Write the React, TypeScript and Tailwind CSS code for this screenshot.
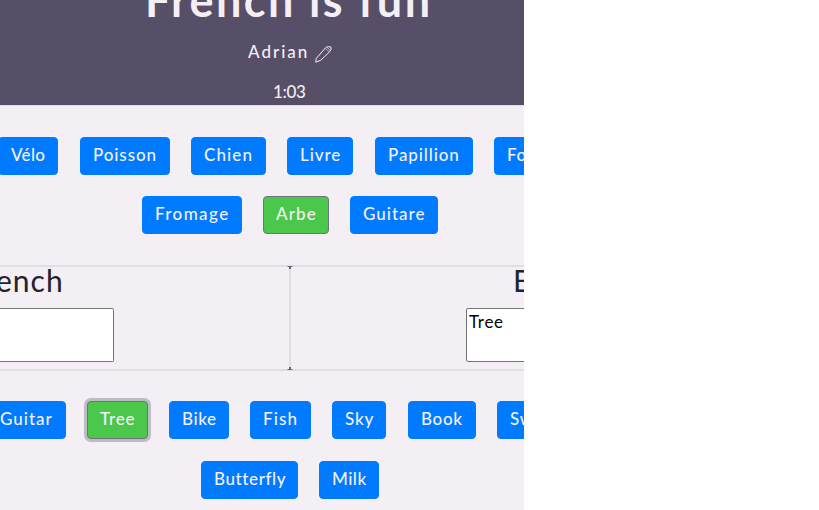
type Word = { text: string; size: string; picked?: boolean; focused?: boolean };

const frenchTop: Word[] = [
  { text: "Vélo", size: "ml-[-2px] w-[60px] tracking-[0.3px]" },
  { text: "Poisson", size: "ml-[22px] w-[90px] tracking-[0.9px]" },
  { text: "Chien", size: "ml-[21px] w-[75px] tracking-[1.1px]" },
  { text: "Livre", size: "ml-[21px] w-[66px] tracking-[0.9px]" },
  { text: "Papillion", size: "ml-[22px] w-[98px] tracking-[0.9px]" },
  { text: "Fo", size: "ml-[21px] w-[46px] tracking-[0.7px]" },
];
const frenchBottom: Word[] = [
  { text: "Fromage", size: "ml-[142px] w-[100px] tracking-[1.4px]" },
  { text: "Arbe", size: "ml-[21px] w-[66px] tracking-[1.1px]", picked: true },
  { text: "Guitare", size: "ml-[21px] w-[88px] tracking-[1px]" },
];
const englishTop: Word[] = [
  { text: "Guitar", size: "ml-[-13px] w-[79px] tracking-[1px]" },
  { text: "Tree", size: "ml-[21px] w-[61px] tracking-[0.8px]", picked: true, focused: true },
  { text: "Bike", size: "ml-[21px] w-[60px] tracking-[0.6px]" },
  { text: "Fish", size: "ml-[21px] w-[61px] tracking-[1.1px]" },
  { text: "Sky", size: "ml-[21px] w-[54px] tracking-[0.8px]" },
  { text: "Book", size: "ml-[22px] w-[68px] tracking-[0.7px]" },
  { text: "Sw", size: "ml-[21px] w-[50px] tracking-[0.7px]" },
];
const englishBottom: Word[] = [
  { text: "Butterfly", size: "ml-[201px] w-[97px] tracking-[0.6px]" },
  { text: "Milk", size: "ml-[21px] w-[60px] tracking-[0.5px]" },
];

function Row({ words, className }: { words: Word[]; className: string }) {
  return (
    <div className={`flex h-[38px] ${className}`}>
      {words.map((w) => (
        <button
          key={w.text}
          className={`h-[38px] shrink-0 whitespace-nowrap rounded-[4px] border pl-3 pb-[2px] text-left text-[17px] leading-[24px] font-medium text-[#f4eff5] ${w.size} ${
            w.picked ? "border-[#6c757d] bg-[#4bc74b]" : "border-[#007bff] bg-[#007bff]"
          } ${w.focused ? "shadow-[0_0_0_3px_#bdbbc6]" : ""}`}
        >
          {w.text}
        </button>
      ))}
    </div>
  );
}

function Pencil() {
  return (
    <svg width="17" height="17" viewBox="0 0 17 17" fill="none" stroke="#f4eff5" strokeWidth="1" strokeLinejoin="round" className="mt-[6px] ml-[6px] shrink-0">
      <path d="M.8 16.200 1.200 12.500 10.500 1.800Q11.500.8 13.500.7L15.800.9Q17 2.800 14.700 5.700L5.800 14.200Z" />
      <path d="M10.500 2.500l3.800 3.300M12 1.300l3 2.700" strokeWidth="0.6" />
    </svg>
  );
}

function Corner({ bottom = false }: { bottom?: boolean }) {
  return (
    <svg width="6" height="3" viewBox="0 0 6 3" className={`absolute right-[-4px] ${bottom ? "bottom-[-1px] rotate-180" : "top-[-1px]"}`}>
      <path d="M.5 0h5v1H4v2H2V1H.5Z" fill="#574e68" fillOpacity="0.85" />
    </svg>
  );
}

export default function App() {
  return (
    <div className="h-[510px] w-full overflow-hidden bg-white font-['Lato',sans-serif]">
      <main className="h-full w-[524px] overflow-hidden bg-[#f4eff5]">
        <header className="flex h-[106px] w-[524px] flex-col overflow-hidden border-b border-[#dfdfdf] bg-[#574e68] text-[#f4eff5]">
          <h1 className="mt-[-28px] ml-[145px] h-[60px] whitespace-nowrap text-[45px] leading-[56px] font-bold tracking-[2.4px]">
            French is fun
          </h1>
          <div className="ml-[248px] mt-[8px] flex h-[26px] text-[17px] leading-[24px] font-medium tracking-[2px]">
            <span className="w-[61px]">Adrian</span>
            <Pencil />
          </div>
          <div className="ml-[273px] mt-[13px] text-[17px] leading-[26px] font-medium tracking-[-0.3px]">1:03</div>
        </header>
        <Row words={frenchTop} className="mt-[31px]" />
        <Row words={frenchBottom} className="mt-[21px]" />
        <section className="mt-[31px] flex h-[106px] w-[524px] border-y-2 border-[#dfdfdf] text-[#212529]">
          <div className="relative w-[291px] border-r-2 border-[#dfdfdf]">
            <h2 className="ml-[-32px] mt-[-3px] h-[44px] pt-[1px] text-[30px] leading-[30px] tracking-[1px]">French</h2>
            <div className="h-[54px] w-[114px] rounded-r-[2px] border border-l-0 border-[#767676] bg-white" />
            <Corner />
            <Corner bottom />
          </div>
          <div className="w-[233px] overflow-hidden">
            <h2 className="ml-[222px] mt-[-3px] h-[44px] pt-[1px] text-[30px] leading-[30px]">E</h2>
            <div className="ml-[175px] h-[54px] w-[80px] rounded-l-[2px] border border-[#767676] bg-white pl-[2px] pt-[1px] text-[17px] leading-[24px] tracking-[0.7px] text-black">
              Tree
            </div>
          </div>
        </section>
        <Row words={englishTop} className="mt-[30px]" />
        <Row words={englishBottom} className="mt-[22px]" />
      </main>
    </div>
  );
}
